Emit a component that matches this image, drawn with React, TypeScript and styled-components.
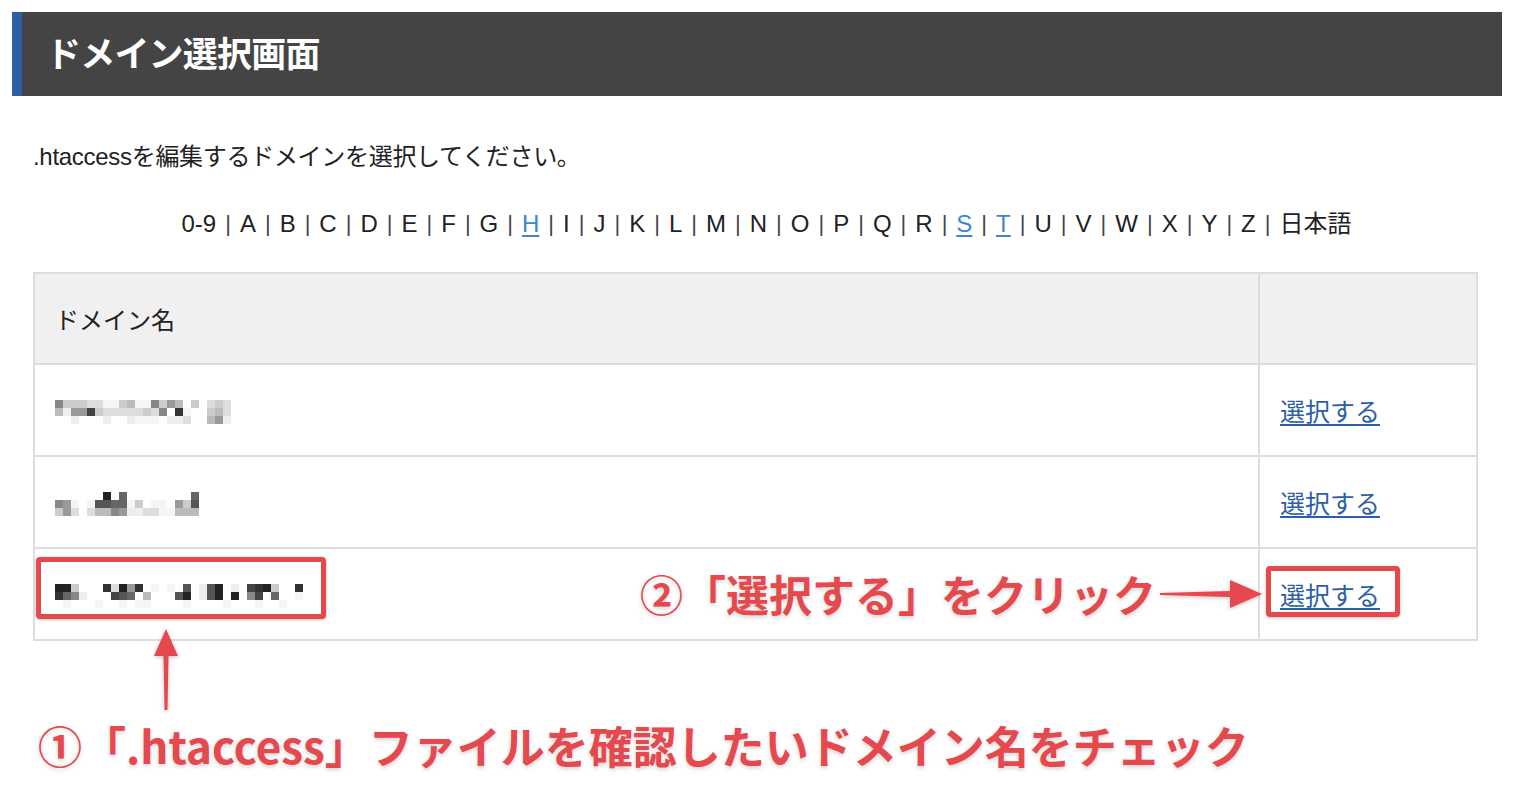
import React from "react";
import styled, { createGlobalStyle } from "styled-components";

const GlobalStyle = createGlobalStyle`
  html, body { margin: 0; padding: 0; background: #ffffff; }
  body {
    font-family: "Liberation Sans", Arial, "Noto Sans CJK JP", sans-serif;
    color: #222222;
  }
`;

const Page = styled.div`
  position: relative;
  width: 1518px;
  height: 810px;
  box-sizing: border-box;
  padding: 12px 16px 0 12px;
  overflow: hidden;
  display: flex;
  flex-direction: column;
`;

const TitleBar = styled.h1`
  margin: 0;
  height: 84px;
  box-sizing: border-box;
  background: #444444;
  border-left: 10px solid #2f5ea8;
  padding: 0 0 6px 24px;
  display: flex;
  align-items: center;
  color: #ffffff;
  font-family: "Noto Sans CJK JP", sans-serif;
  font-weight: 700;
  font-size: 35px;
  letter-spacing: -0.8px;
`;

const Content = styled.main`
  display: flex;
  flex-direction: column;
  padding: 44px 24px 0 21px;
`;

const Intro = styled.p`
  margin: 0;
  font-size: 24px;
  line-height: 34px;
  color: #222222;
  letter-spacing: -0.3px;
`;

const Nav = styled.nav`
  margin-top: 33px;
  display: flex;
  justify-content: center;
  align-items: center;
  gap: 9px;
  font-size: 24px;
  line-height: 34px;
  padding-left: 22px;
`;

const NavItem = styled.span<{ $link?: boolean }>`
  color: ${(p) => (p.$link ? "#3a86d2" : "#222222")};
  text-decoration: ${(p) => (p.$link ? "underline" : "none")};
  text-underline-offset: 3px;
  text-decoration-thickness: 2px;
`;

const Sep = styled.span`
  color: #444444;
  font-size: 22px;
`;

const Table = styled.table`
  margin-top: 31px;
  width: 100%;
  border-collapse: collapse;
  border: 2px solid #dddddd;
`;

const HeadCell = styled.th<{ $narrow?: boolean }>`
  background: #f0f0f0;
  height: 89px;
  padding: 0 20px;
  border: 2px solid #dddddd;
  text-align: left;
  font-weight: 400;
  font-size: 24px;
  color: #222222;
  width: ${(p) => (p.$narrow ? "176px" : "auto")};
`;

const Cell = styled.td`
  height: 90px;
  padding: 0 20px;
  border: 2px solid #dddddd;
  vertical-align: middle;
  font-size: 24px;
`;

const SelectLink = styled.a`
  color: #2c5ea8;
  text-decoration: underline;
  text-underline-offset: 3px;
  text-decoration-thickness: 2px;
  font-family: "Noto Sans CJK JP", sans-serif;
  font-size: 25px;
  cursor: pointer;
`;

const Mosaic = styled.svg`
  display: block;
  margin-top: 4px;
`;

const RedBox = styled.div`
  position: absolute;
  box-sizing: border-box;
  border: 5px solid #e5484d;
  border-radius: 4px;
  box-shadow: 0 1px 3px rgba(0, 0, 0, 0.25);
`;

const Callout = styled.div<{ $size: number }>`
  position: absolute;
  white-space: nowrap;
  font-family: "Noto Sans CJK JP", sans-serif;
  font-weight: 700;
  font-size: ${(p) => p.$size}px;
  line-height: 1;
  color: #e5484d;
  -webkit-text-stroke: 9px #ffffff;
  paint-order: stroke fill;
  text-shadow: 0 2px 4px rgba(0, 0, 0, 0.18);
`;

const ArrowSvg = styled.svg`
  position: absolute;
  overflow: visible;
  filter: drop-shadow(0 1px 2px rgba(0, 0, 0, 0.25));
`;

const GRAY: Record<string, string> = {
  "0": "#222222",
  "1": "#333333",
  "2": "#444444",
  "3": "#555555",
  "4": "#666666",
  "5": "#888888",
  "6": "#999999",
  "7": "#bbbbbb",
  "8": "#cccccc",
  "9": "#dddddd",
  e: "#eeeeee",
  f: "#f5f5f5",
};

function Pixelated({ rows }: { rows: string[] }) {
  const cols = Math.max(...rows.map((r) => r.length));
  return (
    <Mosaic width={cols * 8} height={rows.length * 8} viewBox={`0 0 ${cols * 8} ${rows.length * 8}`}>
      {rows.map((r, y) =>
        r.split("").map((c, x) =>
          GRAY[c] ? <rect key={`${x}-${y}`} x={x * 8} y={y * 8} width={8} height={8} fill={GRAY[c]} /> : null
        )
      )}
    </Mosaic>
  );
}

const letters = [
  "0-9", "A", "B", "C", "D", "E", "F", "G", "H", "I", "J", "K", "L", "M",
  "N", "O", "P", "Q", "R", "S", "T", "U", "V", "W", "X", "Y", "Z", "日本語",
];
const linked = new Set(["H", "S", "T"]);

const domains: string[][] = [
  ["588899ff87ff5867.8.989", "7e662899999895.1f..879", "..e...e..efff.ee9..76e"],
  ["......0.4........4", "56f.f3344f8.ff.683", "869.97756ee99ff777"],
  ["008...19061.f.f.3.e30.e.2108..1", "145e...234.7...30.e30.0.52.4..f", ".f...f..f.ff....f....f...f..f.."],
];

export default function App() {
  return (
    <>
      <GlobalStyle />
      <Page>
        <TitleBar>ドメイン選択画面</TitleBar>
        <Content>
          <Intro>.htaccessを編集するドメインを選択してください。</Intro>
          <Nav>
            {letters.map((l, i) => (
              <React.Fragment key={l}>
                {i > 0 && <Sep>|</Sep>}
                <NavItem $link={linked.has(l)}>{l}</NavItem>
              </React.Fragment>
            ))}
          </Nav>
          <Table>
            <thead>
              <tr>
                <HeadCell>ドメイン名</HeadCell>
                <HeadCell $narrow />
              </tr>
            </thead>
            <tbody>
              {domains.map((d, i) => (
                <tr key={i}>
                  <Cell>
                    <Pixelated rows={d} />
                  </Cell>
                  <Cell>
                    <SelectLink>選択する</SelectLink>
                  </Cell>
                </tr>
              ))}
            </tbody>
          </Table>
        </Content>

        <RedBox style={{ left: 36, top: 557, width: 290, height: 62 }} />
        <RedBox style={{ left: 1266, top: 566, width: 134, height: 51 }} />

        <ArrowSvg style={{ left: 1150, top: 570 }} width={120} height={50} viewBox="0 0 120 50">
          <polygon points="10,23 80,21 80,10 112,24 80,38 80,27 10,25" fill="#e5484d" />
        </ArrowSvg>
        <ArrowSvg style={{ left: 146, top: 620 }} width={40} height={100} viewBox="0 0 40 100">
          <polygon points="20,9 32,36 22.5,36 21.5,90 18.5,90 17.5,36 8,36" fill="#e5484d" />
        </ArrowSvg>

        <Callout $size={43} style={{ left: 640, top: 572 }}>②「選択する」をクリック</Callout>
        <Callout $size={44} style={{ left: 38, top: 723 }}>
          ①「.htaccess」ファイルを確認したいドメイン名をチェック
        </Callout>
      </Page>
    </>
  );
}
